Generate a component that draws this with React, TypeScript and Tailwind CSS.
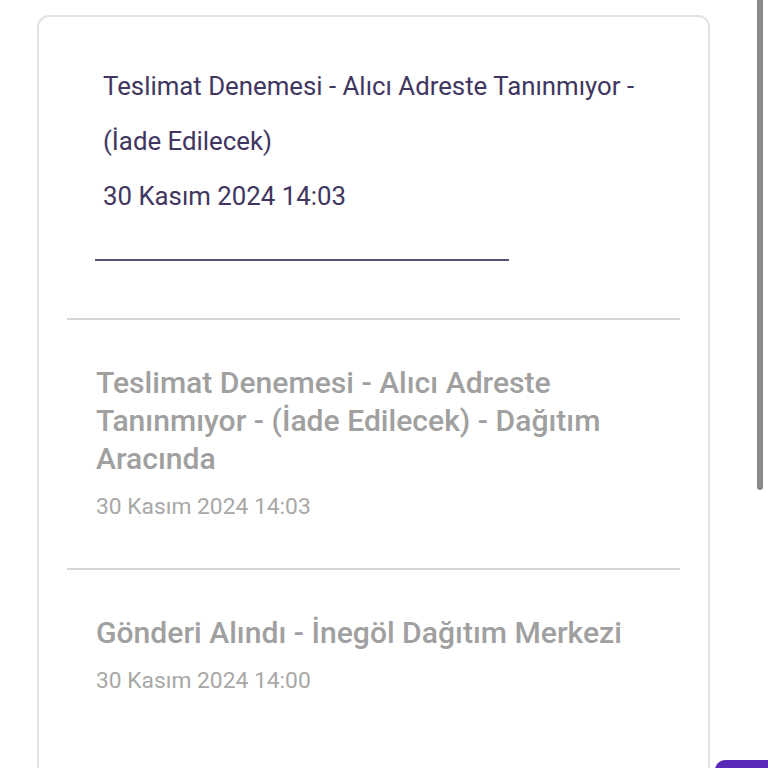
import React from 'react';

type Step = {
  title: string;
  date: string;
};

const steps: Step[] = [
  {
    title: 'Teslimat Denemesi - Alıcı Adreste Tanınmıyor - (İade Edilecek) - Dağıtım Aracında',
    date: '30 Kasım 2024 14:03',
  },
  {
    title: 'Gönderi Alındı - İnegöl Dağıtım Merkezi',
    date: '30 Kasım 2024 14:00',
  },
];

export default function App() {
  return (
    <div
      className="relative h-[768px] w-[768px] overflow-hidden bg-white"
      style={{ fontFamily: 'Roboto, "Noto Sans", sans-serif' }}
    >
      <div className="ml-[37px] mr-[58px] mt-[15px] h-[800px] rounded-[12px] border-2 border-[#e2e2e2]">
        {/* current status */}
        <div className="pl-[56px] pt-[42px]">
          <div className="w-[560px] pl-[8px] text-[25.8px] leading-[55px] text-[#40365f]">
            <p>Teslimat Denemesi - Alıcı Adreste Tanınmıyor - (İade Edilecek)</p>
            <p>30 Kasım 2024 14:03</p>
          </div>
          <div className="mt-[35px] h-[2px] w-[414px] bg-[#5a5176]" />
        </div>

        <div className="mt-[57px] px-[28px]">
          {steps.map((s, i) => (
            <div key={i} className="border-t-2 border-[#d6d6d6] pb-[46px] pt-[44px]">
              <div className="pl-[29px] pr-[30px]">
                <p className="text-[30.1px] font-medium leading-[38px] text-[#a0a0a0]">{s.title}</p>
                <p className="mt-[14px] text-[22.8px] leading-[30px] text-[#a8a8a8]">{s.date}</p>
              </div>
            </div>
          ))}
        </div>
      </div>

      {/* scrollbar */}
      <div className="absolute right-[5px] top-0 h-[490px] w-[6px] rounded-b-full bg-[#8a8a8a]" />

      {/* floating button edge */}
      <div className="absolute left-[715px] top-[760px] h-[40px] w-[80px] rounded-tl-[10px] bg-[#5a2bb8]" />
    </div>
  );
}
